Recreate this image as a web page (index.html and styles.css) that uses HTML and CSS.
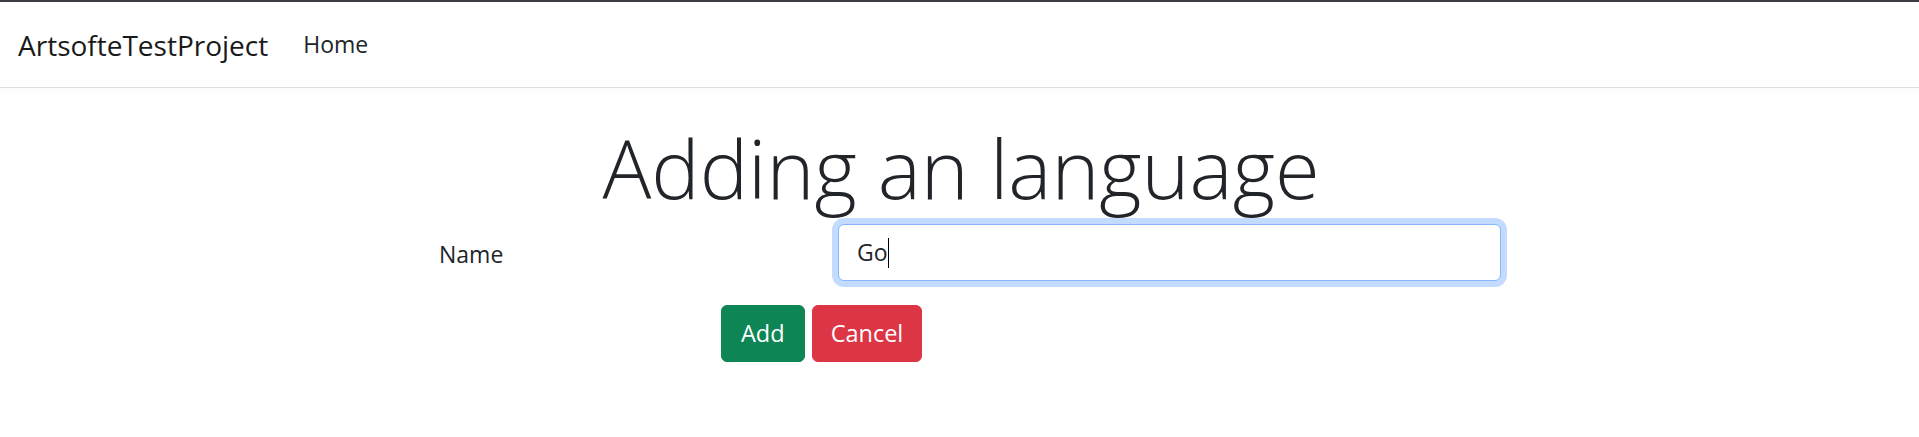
FILE: index.html
```html
<!DOCTYPE html>
<html lang="en">
<head>
<meta charset="utf-8">
<title>Adding an language - ArtsofteTestProject</title>
<link rel="stylesheet" href="styles.css">
</head>
<body>
<div class="topbar"></div>
<header class="navbar">
  <a class="brand" href="#">ArtsofteTestProject</a>
  <nav class="nav">
    <a class="nav-link" href="#">Home</a>
  </nav>
</header>
<main class="main">
  <h1 class="title">Adding an language</h1>
  <form class="form">
    <div class="form-row">
      <label class="label">Name</label>
      <div class="input is-focused" role="textbox">Go<span class="caret"></span></div>
    </div>
    <div class="actions">
      <button type="button" class="btn btn-success">Add</button>
      <button type="button" class="btn btn-danger">Cancel</button>
    </div>
  </form>
</main>
</body>
</html>
```
FILE: styles.css
```css
* { box-sizing: border-box; }
html, body { margin: 0; padding: 0; }
body {
  font-family: "Open Sans", "Noto Sans", sans-serif;
  font-size: 24px;
  line-height: 1.5;
  color: #212529;
  background: #fff;
}
.topbar {
  height: 2px;
  background: #3d3d45;
}
.navbar {
  display: flex;
  align-items: center;
  height: 86px;
  padding: 0 18px;
  border-bottom: 1px solid #e0e0e0;
  box-shadow: 0 3px 8px rgba(0,0,0,0.02);
}
.brand {
  font-size: 28px;
  color: #1a1a1a;
  text-decoration: none;
  margin-right: 23px;
}
.nav { display: flex; }
.nav-link {
  padding: 0 12px;
  color: #212529;
  text-decoration: none;
  font-size: 23px;
}
.main {
  padding-top: 31px;
}
.title {
  margin: 0 0 7px;
  text-align: center;
  font-weight: 300;
  font-size: 81.3px;
  line-height: 1.2;
  padding-left: 3px;
}
.form {
  margin-left: 439px;
}
.form-row {
  display: flex;
  align-items: center;
  margin-bottom: 24px;
}
.label {
  width: 399px;
  font-size: 23px;
  padding-top: 4px;
}
.input {
  width: 663px;
  height: 57px;
  padding: 9px 18px;
  font-size: 23px;
  line-height: 37px;
  color: #212529;
  border: 1px solid #86b7fe;
  border-radius: 6px;
  box-shadow: 0 0 0 6px rgba(13,110,253,0.25);
  background: #fff;
}
.caret {
  display: inline-block;
  width: 1px;
  height: 30px;
  background: #000;
  vertical-align: -7px;
}
.actions {
  display: flex;
  gap: 7px;
  margin-left: 282px;
}
.btn {
  font-family: inherit;
  font-size: 23.5px;
  line-height: 37px;
  height: 57px;
  padding: 9px 18px;
  border: 1px solid transparent;
  border-radius: 6px;
  color: #fff;
  cursor: pointer;
}
.btn-success { background: #0d8555; border-color: #0d8555; padding: 9px 19px; }
.btn-danger { background: #dc3545; border-color: #dc3545; }
```
